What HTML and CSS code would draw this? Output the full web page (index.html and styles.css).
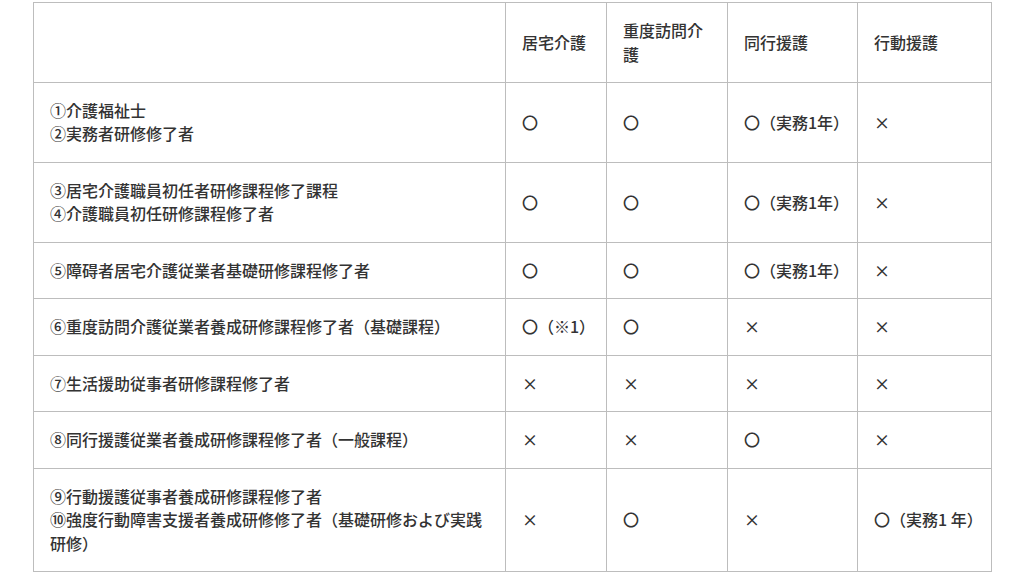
FILE: index.html
```html
<!DOCTYPE html>
<html lang="ja">
<head>
  <meta charset="UTF-8" />
  <meta name="viewport" content="width=device-width, initial-scale=1.0" />
  <title>資格要件一覧</title>
  <link rel="stylesheet" href="styles.css">
</head>
<body>
  <div class="wrap">
    <table class="qual-table">
      <colgroup>
        <col class="col-name">
        <col class="col-a">
        <col class="col-b">
        <col class="col-c">
        <col class="col-d">
      </colgroup>
      <thead>
        <tr>
          <th></th>
          <th>居宅介護</th>
          <th>重度訪問介護</th>
          <th>同行援護</th>
          <th>行動援護</th>
        </tr>
      </thead>
      <tbody>
        <tr>
          <td>①介護福祉士<br>②実務者研修修了者</td>
          <td>〇</td>
          <td>〇</td>
          <td>〇（実務1年）</td>
          <td>×</td>
        </tr>
        <tr>
          <td>③居宅介護職員初任者研修課程修了課程<br>④介護職員初任研修課程修了者</td>
          <td>〇</td>
          <td>〇</td>
          <td>〇（実務1年）</td>
          <td>×</td>
        </tr>
        <tr>
          <td>⑤障碍者居宅介護従業者基礎研修課程修了者</td>
          <td>〇</td>
          <td>〇</td>
          <td>〇（実務1年）</td>
          <td>×</td>
        </tr>
        <tr>
          <td>⑥重度訪問介護従業者養成研修課程修了者（基礎課程）</td>
          <td>〇（※1）</td>
          <td>〇</td>
          <td>×</td>
          <td>×</td>
        </tr>
        <tr>
          <td>⑦生活援助従事者研修課程修了者</td>
          <td>×</td>
          <td>×</td>
          <td>×</td>
          <td>×</td>
        </tr>
        <tr>
          <td>⑧同行援護従業者養成研修課程修了者（一般課程）</td>
          <td>×</td>
          <td>×</td>
          <td>〇</td>
          <td>×</td>
        </tr>
        <tr>
          <td>⑨行動援護従事者養成研修課程修了者<br>⑩強度行動障害支援者養成研修修了者（基礎研修および実践研修）</td>
          <td>×</td>
          <td>〇</td>
          <td>×</td>
          <td>〇（実務1 年）</td>
        </tr>
      </tbody>
    </table>
  </div>
</body>
</html>
```

FILE: styles.css
```css
body {
  margin: 0;
  background: #fff;
  color: #333;
  font-family: "Noto Sans CJK JP", "Noto Sans", sans-serif;
  font-size: 16px;
}
.wrap {
  padding: 2px 0 0 33px;
}
.qual-table {
  border-collapse: collapse;
  table-layout: fixed;
  width: 958px;
}
.col-name { width: 472px; }
.col-a { width: 101px; }
.col-b { width: 121px; }
.col-c { width: 130px; }
.col-d { width: 134px; }
.qual-table th,
.qual-table td {
  border: 1px solid #bdbdbd;
  padding: 16px 16px;
  line-height: 23.45px;
  text-align: left;
  vertical-align: middle;
  font-weight: 500;
}
.qual-table td + td {
  white-space: nowrap;
}
.qual-table th {
  height: 47px;
}
```
